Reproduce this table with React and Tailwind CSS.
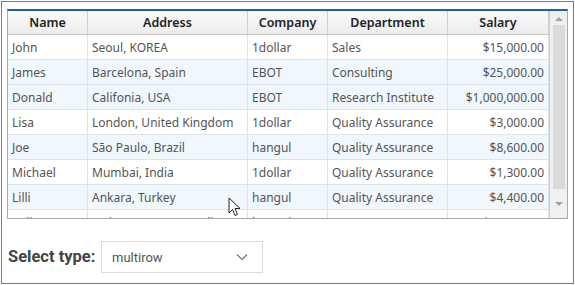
import React from "react";

const cols = [
  { key: "name", label: "Name", w: "w-[80px]" },
  { key: "addr", label: "Address", w: "w-[160px]" },
  { key: "comp", label: "Company", w: "w-[80px]" },
  { key: "dept", label: "Department", w: "w-[120px]" },
  { key: "sal", label: "Salary", w: "w-[101px]" },
];

const rows = [
  ["John", "Seoul, KOREA", "1dollar", "Sales", "$15,000.00", false],
  ["James", "Barcelona, Spain", "EBOT", "Consulting", "$25,000.00", true],
  ["Donald", "Califonia, USA", "EBOT", "Research Institute", "$1,000,000.00", true],
  ["Lisa", "London, United Kingdom", "1dollar", "Quality Assurance", "$3,000.00", false],
  ["Joe", "São Paulo, Brazil", "hangul", "Quality Assurance", "$8,600.00", true],
  ["Michael", "Mumbai, India", "1dollar", "Quality Assurance", "$1,300.00", false],
  ["Lilli", "Ankara, Turkey", "hangul", "Quality Assurance", "$4,400.00", true],
  ["Calista", "Sydney, NSW, Australia", "hangul", "R&D", "$22,000.00", false],
];

export default function App() {
  return (
    <div className="relative w-[575px] h-[285px] bg-white p-px" style={{ fontFamily: '"Noto Sans", "Open Sans", sans-serif' }}>
      <div className="w-full h-full border border-[#7a7a7a] px-[5px] pt-[7px]">
        <div className="w-[561px] h-[210px] border border-[#a9a9a9] border-t-2 border-t-[#1a62b8] flex overflow-hidden">
          <div className="flex-1 flex flex-col overflow-hidden">
            <div className="flex h-[24px] shrink-0 bg-gradient-to-b from-[#fafafa] to-[#ececec] border-b border-[#c8c8c8]">
              {cols.map((c) => (
                <div key={c.key} className={`${c.w} shrink-0 border-r border-[#d0d0d0] flex items-center justify-center pt-px text-[12.5px] font-semibold text-[#222]`}>
                  {c.label}
                </div>
              ))}
            </div>
            {rows.map((r, i) => (
              <div key={i} className={`flex h-[25px] shrink-0 border-b border-[#dde3ea] ${r[5] ? "bg-[#f0f7fd]" : "bg-white"}`}>
                {cols.map((c, j) => (
                  <div key={c.key} className={`${c.w} shrink-0 border-r border-[#dde3ea] flex items-center px-[4px] pt-px text-[12px] text-[#555] whitespace-nowrap overflow-hidden ${j === 4 ? "justify-end" : ""}`}>
                    {r[j]}
                  </div>
                ))}
              </div>
            ))}
          </div>
          <div className="w-[18px] shrink-0 border-l border-[#cfcfcf] bg-[#f0f0f0] flex flex-col items-center">
            <div className="h-[14px] w-full flex items-center justify-center">
              <div className="w-0 h-0 border-x-[4px] border-x-transparent border-b-[4px] border-b-[#a3a3a3] mt-[2px]" />
            </div>
            <div className="w-[12px] h-[164px] bg-[#dadada]" />
            <div className="flex-1 w-full flex items-center justify-center">
              <div className="w-0 h-0 border-x-[4px] border-x-transparent border-t-[4px] border-t-[#a3a3a3]" />
            </div>
          </div>
        </div>
        <div className="flex items-center mt-[22px] ml-px">
          <span className="text-[16.5px] font-bold text-[#444] w-[93px] whitespace-nowrap" style={{ fontFamily: 'Roboto, "Noto Sans", sans-serif' }}>Select type:</span>
          <div className="w-[162px] h-[32px] border border-[#dcdcdc] flex items-center justify-between pl-[10px] pr-[14px]">
            <span className="text-[13px] text-[#555] pt-px" style={{ fontFamily: 'Roboto, sans-serif' }}>multirow</span>
            <svg width="12" height="8" viewBox="0 0 12 8"><path d="M1 1.5 L6 6.5 L11 1.5" fill="none" stroke="#777" strokeWidth="1.2" /></svg>
          </div>
        </div>
      </div>
      <svg className="absolute left-[228px] top-[197px]" width="14" height="20" viewBox="0 0 14 20">
        <path d="M1 1 L1 16 L4.5 12.5 L7 18.5 L9.5 17.5 L7 11.5 L12 11.5 Z" fill="white" stroke="#222" strokeWidth="1" strokeLinejoin="round" />
      </svg>
    </div>
  );
}
